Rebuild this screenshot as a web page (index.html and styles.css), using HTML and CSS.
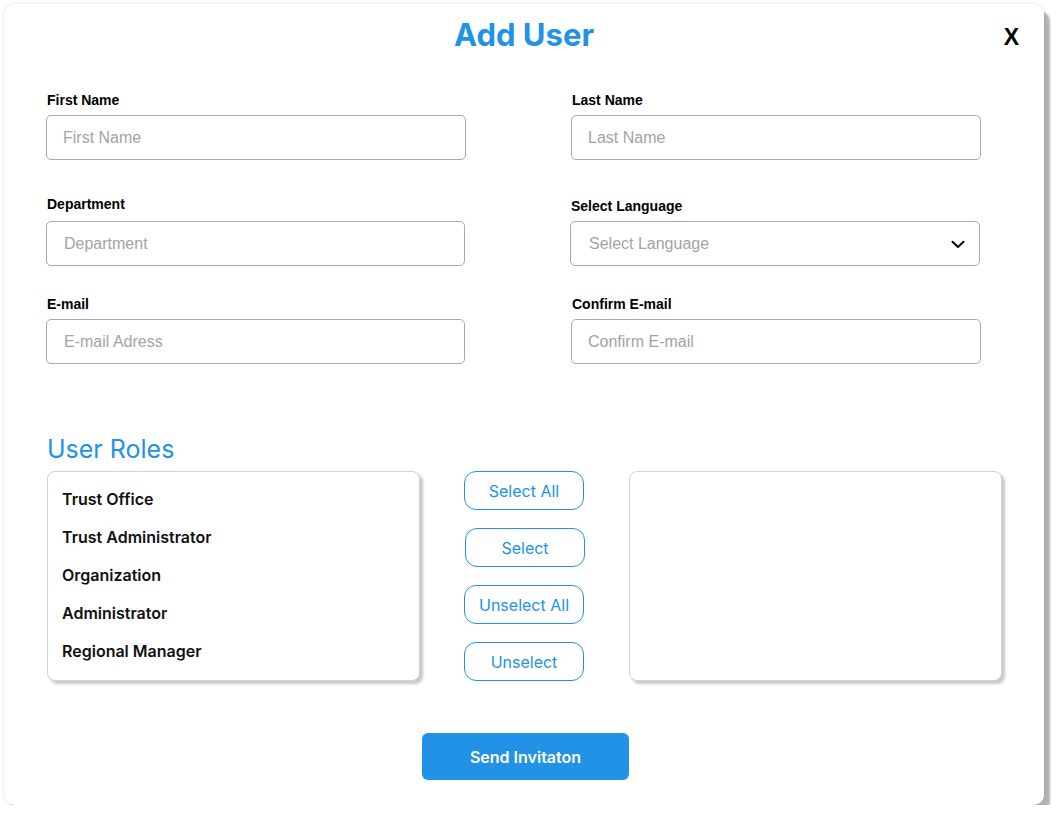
FILE: index.html
```html
<!DOCTYPE html>
<html>
<head>
<meta charset="utf-8">
<title>Add User</title>
<link rel="stylesheet" href="styles.css">
</head>
<body>
<div class="card">
  <h1 class="title">Add User</h1>
  <button class="close" type="button">X</button>

  <div class="form-row row-1">
    <div class="field field-left">
      <label class="label">First Name</label>
      <div class="input"><span class="ph">First Name</span></div>
    </div>
    <div class="field field-right">
      <label class="label">Last Name</label>
      <div class="input"><span class="ph">Last Name</span></div>
    </div>
  </div>

  <div class="form-row row-2">
    <div class="field field-left">
      <label class="label">Department</label>
      <div class="input input-narrow"><span class="ph">Department</span></div>
    </div>
    <div class="field field-right field-shift">
      <label class="label">Select Language</label>
      <div class="input select"><span class="ph">Select Language</span>
        <svg class="chev" width="14" height="9" viewBox="0 0 14 9"><path d="M1.5 1.8 L7 7 L12.5 1.8" fill="none" stroke="#000" stroke-width="2" stroke-linecap="round" stroke-linejoin="round"/></svg>
      </div>
    </div>
  </div>

  <div class="form-row row-3">
    <div class="field field-left">
      <label class="label">E-mail</label>
      <div class="input input-narrow"><span class="ph">E-mail Adress</span></div>
    </div>
    <div class="field field-right">
      <label class="label">Confirm E-mail</label>
      <div class="input"><span class="ph">Confirm E-mail</span></div>
    </div>
  </div>

  <h2 class="roles-title">User Roles</h2>
  <div class="roles">
    <ul class="list">
      <li>Trust Office</li>
      <li>Trust Administrator</li>
      <li>Organization</li>
      <li>Administrator</li>
      <li>Regional Manager</li>
    </ul>
    <div class="actions">
      <button class="outline" type="button">Select All</button>
      <button class="outline outline-shift" type="button">Select</button>
      <button class="outline" type="button">Unselect All</button>
      <button class="outline" type="button">Unselect</button>
    </div>
    <div class="list list-empty"></div>
  </div>

  <div class="footer">
    <button class="primary" type="button">Send Invitaton</button>
  </div>
</div>
</body>
</html>
```

FILE: styles.css
```css
* { box-sizing: border-box; }
html, body { margin: 0; padding: 0; background: #ffffff; }
body { font-family: "Liberation Sans", Arial, sans-serif; color: #000; }

.card {
  position: relative;
  margin: 4px 0 0 4px;
  width: 1040px;
  height: 801px;
  background: #fff;
  border-radius: 10px;
  box-shadow: 6px 7px 2px rgba(0, 0, 0, 0.3), 0 0 3px rgba(0, 0, 0, 0.14);
  padding: 12px 0 0 42px;
}

.title {
  margin: 0;
  text-align: center;
  font-family: Inter, "Noto Sans", sans-serif;
  font-weight: 700;
  font-size: 31px;
  line-height: 38px;
  color: #2192e6;
  padding-right: 42px;
}

.close {
  position: absolute;
  top: 19px;
  right: 25px;
  border: 0;
  background: none;
  padding: 0;
  font-family: "Liberation Sans", Arial, sans-serif;
  font-weight: 700;
  font-size: 23px;
  line-height: 28px;
  color: #000;
}

.form-row { display: flex; }
.row-1 { margin-top: 38px; }
.row-2 { margin-top: 36px; }
.row-2 .label { margin-bottom: 9px; }
.row-3 { margin-top: 30px; }

.field { display: flex; flex-direction: column; }
.field-left { width: 420px; }
.field-right { width: 410px; margin-left: 105px; }
.field-shift { margin-left: 104px; }
.field-shift .label { position: relative; top: 2px; }

.label {
  font-size: 14px;
  font-weight: 700;
  line-height: 16px;
  margin-bottom: 7px;
  padding-left: 1px;
}

.input {
  height: 45px;
  border: 1px solid #a9a9ab;
  border-radius: 5px;
  display: flex;
  align-items: center;
  padding-left: 16px;
}
.input-narrow { width: 419px; }
.field-left .input-narrow { padding-left: 17px; }

.ph {
  font-size: 16px;
  color: #a3a3a6;
}

.select { justify-content: space-between; padding-right: 14px; padding-left: 18px; }
.chev { display: block; margin-top: 2px; }

.roles-title {
  margin: 71px 0 0 1px;
  font-family: Inter, "Noto Sans", sans-serif;
  font-weight: 400;
  font-size: 25px;
  line-height: 29px;
  color: #2192e6;
}

.roles {
  display: flex;
  margin-top: 7px;
  margin-left: 1px;
  height: 210px;
}

.list {
  margin: 0;
  list-style: none;
  width: 373px;
  height: 210px;
  border: 1px solid #d2d2d2;
  border-radius: 8px;
  box-shadow: 3px 3px 3px rgba(0, 0, 0, 0.22);
  padding: 8px 0 0 14px;
  background: #fff;
}
.list li {
  font-family: Inter, "Noto Sans", sans-serif;
  font-weight: 600;
  font-size: 16px;
  line-height: 38px;
  color: #111;
}

.actions {
  width: 121px;
  margin: 0 44px 0 44px;
  display: flex;
  flex-direction: column;
  justify-content: space-between;
}

.outline {
  height: 39px;
  width: 120px;
  border: 1px solid #2192e6;
  border-radius: 12px;
  background: #fff;
  color: #2192e6;
  font-family: Inter, "Noto Sans", sans-serif;
  font-size: 16px;
  font-weight: 400;
  padding: 0;
}
.outline-shift { margin-left: 1px; }

.footer {
  display: flex;
  justify-content: center;
  margin-top: 52px;
  padding-right: 39px;
}

.primary {
  width: 207px;
  height: 47px;
  border: 0;
  border-radius: 6px;
  background: #2192e6;
  color: #fff;
  font-family: Inter, "Noto Sans", sans-serif;
  font-size: 16px;
  font-weight: 600;
}
```
